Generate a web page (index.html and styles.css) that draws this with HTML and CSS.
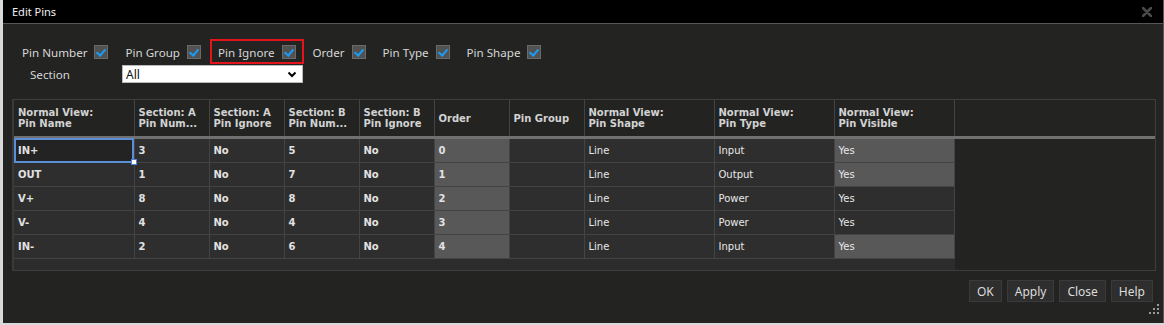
FILE: index.html
```html
<!DOCTYPE html>
<html lang="en">
<head>
    <meta charset="UTF-8">
    <title>Edit Pins</title>
    <link rel="stylesheet" href="styles.css">
</head>
<body>

    <div class="dialog">
        <div class="title-bar">
            <span class="title">Edit Pins</span>
            <svg class="title-close" width="10" height="10" viewBox="0 0 10 10">
                <path d="M1 1 L9 9 M9 1 L1 9" stroke="#4a4a4a" stroke-width="2.6" stroke-linecap="round"/>
            </svg>
        </div>

        <div class="options">
            <div class="option-row">
                <label class="option">Pin Number <span class="check"></span></label>
                <label class="option">Pin Group <span class="check"></span></label>
                <label class="option option-marked">Pin Ignore <span class="check"></span></label>
                <label class="option">Order <span class="check"></span></label>
                <label class="option">Pin Type <span class="check"></span></label>
                <label class="option">Pin Shape <span class="check"></span></label>
            </div>
            <div class="section-row">
                <span class="section-label">Section</span>
                <div class="select">
                    <span>All</span>
                    <svg width="10" height="7" viewBox="0 0 10 7">
                        <path d="M1.5 1.5 L5 5 L8.5 1.5" fill="none" stroke="#000" stroke-width="2"/>
                    </svg>
                </div>
            </div>
        </div>

        <div class="grid">
            <table class="pin-table">
                <colgroup>
                    <col style="width:120px"><col style="width:75px"><col style="width:75px">
                    <col style="width:75px"><col style="width:75px"><col style="width:75px">
                    <col style="width:75px"><col style="width:130px"><col style="width:120px">
                    <col style="width:120px"><col>
                </colgroup>
                <thead>
                    <tr>
                        <th>Normal View:<br>Pin Name</th>
                        <th>Section: A<br>Pin Num...</th>
                        <th>Section: A<br>Pin Ignore</th>
                        <th>Section: B<br>Pin Num...</th>
                        <th>Section: B<br>Pin Ignore</th>
                        <th>Order</th>
                        <th>Pin Group</th>
                        <th>Normal View:<br>Pin Shape</th>
                        <th>Normal View:<br>Pin Type</th>
                        <th>Normal View:<br>Pin Visible</th>
                        <th class="filler"></th>
                    </tr>
                </thead>
                <tbody id="pin-body"></tbody>
            </table>
            <div class="grid-strip"></div>
        </div>

        <div class="buttons">
            <button class="btn">OK</button>
            <button class="btn">Apply</button>
            <button class="btn">Close</button>
            <button class="btn">Help</button>
        </div>

        <svg class="grip" width="11" height="11" viewBox="0 0 11 11">
            <rect x="8" y="0" width="2" height="2" fill="#9a9a9a"/>
            <rect x="4" y="4" width="2" height="2" fill="#9a9a9a"/>
            <rect x="8" y="4" width="2" height="2" fill="#9a9a9a"/>
            <rect x="0" y="8" width="2" height="2" fill="#9a9a9a"/>
            <rect x="4" y="8" width="2" height="2" fill="#9a9a9a"/>
            <rect x="8" y="8" width="2" height="2" fill="#9a9a9a"/>
        </svg>
    </div>

    <script>
        // pin rows: name, secA num, secA ignore, secB num, secB ignore, order, group, shape, type, visible, visible cell shaded
        const pins = [
            ['IN+', '3', 'No', '5', 'No', '0', '', 'Line', 'Input', 'Yes', true],
            ['OUT', '1', 'No', '7', 'No', '1', '', 'Line', 'Output', 'Yes', true],
            ['V+', '8', 'No', '8', 'No', '2', '', 'Line', 'Power', 'Yes', false],
            ['V-', '4', 'No', '4', 'No', '3', '', 'Line', 'Power', 'Yes', false],
            ['IN-', '2', 'No', '6', 'No', '4', '', 'Line', 'Input', 'Yes', true]
        ];

        const body = document.getElementById('pin-body');
        pins.forEach((p, i) => {
            const row = document.createElement('tr');
            row.innerHTML = `
                <td class="${i === 0 ? 'current' : ''}">${p[0]}${i === 0 ? '<span class="handle"></span>' : ''}</td>
                <td>${p[1]}</td>
                <td>${p[2]}</td>
                <td>${p[3]}</td>
                <td>${p[4]}</td>
                <td class="shaded">${p[5]}</td>
                <td>${p[6]}</td>
                <td class="light">${p[7]}</td>
                <td class="light">${p[8]}</td>
                <td class="light ${p[10] ? 'shaded' : ''}">${p[9]}</td>
                <td class="filler"></td>
            `;
            body.appendChild(row);
        });
    </script>
</body>
</html>
```

FILE: styles.css
```css
/* --- page --- */
body {
    margin: 0;
    background-color: #d9d9d9;
    font-family: "Noto Sans", "Open Sans", sans-serif;
    overflow: hidden;
}

/* --- dialog window --- */
.dialog {
    position: relative;
    margin-left: 3px;
    width: 1160px;
    height: 323px;
    background-color: #232422;
    border-right: 1px solid #5a5a5a;
    display: flex;
    flex-direction: column;
}

.title-bar {
    height: 23px;
    background-color: #000;
    border-bottom: 1px solid #555;
    display: flex;
    align-items: center;
    justify-content: space-between;
    padding: 0 11px 0 9px;
}

.title {
    color: #f0f0f0;
    font-size: 11px;
}

/* --- option checkboxes --- */
.options {
    padding: 15px 0 0 11px;
}

.option-row {
    display: flex;
    gap: 1px;
}

.option {
    display: flex;
    align-items: center;
    gap: 7px;
    height: 16px;
    padding: 3px 6px 2px;
    border: 2px solid transparent;
    color: #d6d6d6;
    font-size: 11.6px;
}

.option-marked {
    border-color: #e3141c;
}

.check {
    width: 12px;
    height: 12px;
    background-color: #525252;
    border: 1px solid #6a6a6a;
    position: relative;
}

.check::after {
    content: "";
    position: absolute;
    left: 3px;
    top: 1px;
    width: 4px;
    height: 7px;
    border-right: 2px solid #1a9bf5;
    border-bottom: 2px solid #1a9bf5;
    transform: rotate(40deg);
}

.section-row {
    display: flex;
    align-items: center;
    margin-top: 1px;
    padding-left: 16px;
}

.section-label {
    width: 92px;
    color: #d6d6d6;
    font-size: 11.6px;
}

.select {
    width: 171px;
    height: 16px;
    background-color: #fff;
    border: 1px solid #bbb;
    display: flex;
    align-items: center;
    justify-content: space-between;
    padding: 0 5px 0 3px;
    color: #111;
    font-size: 12px;
}

/* --- pin grid --- */
.grid {
    margin: 16px 0 0 9px;
    width: 1141px;
    border: 1px solid #3e3e3e;
    border-left: 2px solid #3a3a3a;
}

.pin-table {
    width: 100%;
    table-layout: fixed;
    border-collapse: collapse;
    font-family: "DejaVu Sans", Verdana, sans-serif;
    font-size: 10px;
    font-weight: bold;
}

.pin-table th {
    height: 36px;
    padding: 0 4px;
    text-align: left;
    vertical-align: middle;
    line-height: 11px;
    color: #d2d2d2;
    background-color: #232422;
    border-right: 1px solid #444;
    border-bottom: 3px solid #707070;
    white-space: nowrap;
    overflow: hidden;
}

.pin-table td {
    position: relative;
    height: 23px;
    padding: 0 4px;
    color: #e2e2e2;
    background-color: #2e2e2e;
    border-right: 1px solid #444;
    border-bottom: 1px solid #444;
    white-space: nowrap;
}

.pin-table td.light {
    font-weight: normal;
    color: #e8e8e8;
}

.pin-table td.shaded {
    background-color: #585858;
}

.pin-table th.filler {
    border-right: none;
}

.pin-table td.filler {
    background-color: transparent;
    border: none;
}

.pin-table td.current {
    background-color: #232323;
    outline: 2px solid #5a8fd6;
    outline-offset: -2px;
}

.handle {
    position: absolute;
    right: -3px;
    bottom: -3px;
    width: 4px;
    height: 4px;
    background-color: #fff;
    border: 1px solid #4a86d4;
    z-index: 1;
}

.grid-strip {
    width: 941px;
    height: 11px;
    background-color: #2c2c2c;
}

/* --- bottom buttons --- */
.buttons {
    display: flex;
    justify-content: flex-end;
    gap: 5px;
    margin-top: 9px;
    padding-right: 10px;
}

.btn {
    height: 22px;
    padding: 0 7px;
    background-color: #2e2e2e;
    border: 1px solid #3a3a3a;
    color: #dcdcdc;
    font-family: "Noto Sans", "Open Sans", sans-serif;
    font-size: 12px;
}

.grip {
    position: absolute;
    right: 3px;
    bottom: 8px;
}
```
